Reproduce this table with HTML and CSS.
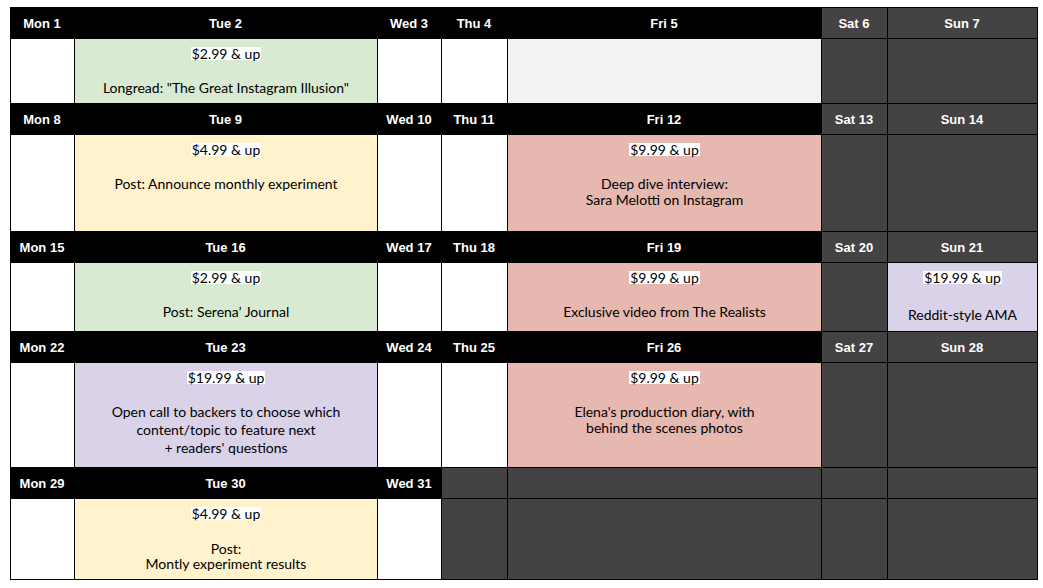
FILE: index.html
```html
<!DOCTYPE html>
<html>
<head>
<meta charset="utf-8">
<link rel="stylesheet" href="styles.css">
</head>
<body>
<div class="cal">
  <div class="hd">Mon 1</div><div class="hd">Tue 2</div><div class="hd">Wed 3</div><div class="hd">Thu 4</div><div class="hd">Fri 5</div><div class="hd we">Sat 6</div><div class="hd we">Sun 7</div>
  <div class="c"></div>
  <div class="c green"><span class="price">$2.99 &amp; up</span><div class="desc">Longread: "The Great Instagram Illusion"</div></div>
  <div class="c"></div><div class="c"></div>
  <div class="c light"></div>
  <div class="c we"></div><div class="c we"></div>

  <div class="hd">Mon 8</div><div class="hd">Tue 9</div><div class="hd">Wed 10</div><div class="hd">Thu 11</div><div class="hd">Fri 12</div><div class="hd we">Sat 13</div><div class="hd we">Sun 14</div>
  <div class="c"></div>
  <div class="c yellow"><span class="price">$4.99 &amp; up</span><div class="desc">Post: Announce monthly experiment</div></div>
  <div class="c"></div><div class="c"></div>
  <div class="c pink"><span class="price">$9.99 &amp; up</span><div class="desc">Deep dive interview:<br>Sara Melotti on Instagram</div></div>
  <div class="c we"></div><div class="c we"></div>

  <div class="hd">Mon 15</div><div class="hd">Tue 16</div><div class="hd">Wed 17</div><div class="hd">Thu 18</div><div class="hd">Fri 19</div><div class="hd we">Sat 20</div><div class="hd we">Sun 21</div>
  <div class="c"></div>
  <div class="c green"><span class="price">$2.99 &amp; up</span><div class="desc">Post: Serena’ Journal</div></div>
  <div class="c"></div><div class="c"></div>
  <div class="c pink"><span class="price">$9.99 &amp; up</span><div class="desc">Exclusive video from The Realists</div></div>
  <div class="c we"></div>
  <div class="c lav"><span class="price">$19.99 &amp; up</span><div class="desc low">Reddit-style AMA</div></div>

  <div class="hd">Mon 22</div><div class="hd">Tue 23</div><div class="hd">Wed 24</div><div class="hd">Thu 25</div><div class="hd">Fri 26</div><div class="hd we">Sat 27</div><div class="hd we">Sun 28</div>
  <div class="c"></div>
  <div class="c lav"><span class="price">$19.99 &amp; up</span><div class="desc tall">Open call to backers to choose which<br>content/topic to feature next<br>+ readers' questions</div></div>
  <div class="c"></div><div class="c"></div>
  <div class="c pink"><span class="price">$9.99 &amp; up</span><div class="desc">Elena's production diary, with<br>behind the scenes photos</div></div>
  <div class="c we"></div><div class="c we"></div>

  <div class="hd">Mon 29</div><div class="hd">Tue 30</div><div class="hd">Wed 31</div><div class="hd we"></div><div class="hd we"></div><div class="hd we"></div><div class="hd we"></div>
  <div class="c"></div>
  <div class="c yellow"><span class="price">$4.99 &amp; up</span><div class="desc short">Post:<br>Montly experiment results</div></div>
  <div class="c"></div>
  <div class="c we"></div><div class="c we"></div><div class="c we"></div><div class="c we"></div>
</div>
</body>
</html>
```

FILE: styles.css
```css
html, body {
  margin: 0;
  padding: 0;
  background: #ffffff;
}
body {
  padding: 7px 0 0 10px;
}
.cal {
  display: grid;
  width: max-content;
  grid-template-columns: 63px 302px 63px 65px 313px 65px 149px;
  grid-template-rows: 30px 64px 30px 96px 30px 68px 30px 104px 30px 80px;
  gap: 1px;
  padding: 1px;
  background: #000000;
}
.hd {
  background: #000000;
  color: #ffffff;
  font-family: "Liberation Sans", Arial, sans-serif;
  font-weight: 700;
  font-size: 13px;
  display: flex;
  align-items: center;
  justify-content: center;
  padding-right: 1px;
}
.hd.we {
  background: #434343;
}
.c {
  background: #ffffff;
  font-family: Lato, "Noto Sans", sans-serif;
  font-size: 14px;
  color: #000000;
  text-align: center;
  padding-top: 8px;
  line-height: 13px;
}
.c.we { background: #434343; }
.c.light { background: #f3f3f3; }
.c.green { background: #d9ead3; }
.c.yellow { background: #fff2cc; }
.c.pink { background: #e6b8af; }
.c.lav { background: #d9d2e9; }
.price {
  display: inline-block;
  background: #ffffff;
  line-height: 13px;
  padding: 0 1px;
}
.desc {
  margin-top: 20px;
  line-height: 16px;
}
.desc.tall { line-height: 18px; margin-top: 19px; }
.desc.short { line-height: 15px; margin-top: 21px; }
.desc.low { margin-top: 23px; }
```
